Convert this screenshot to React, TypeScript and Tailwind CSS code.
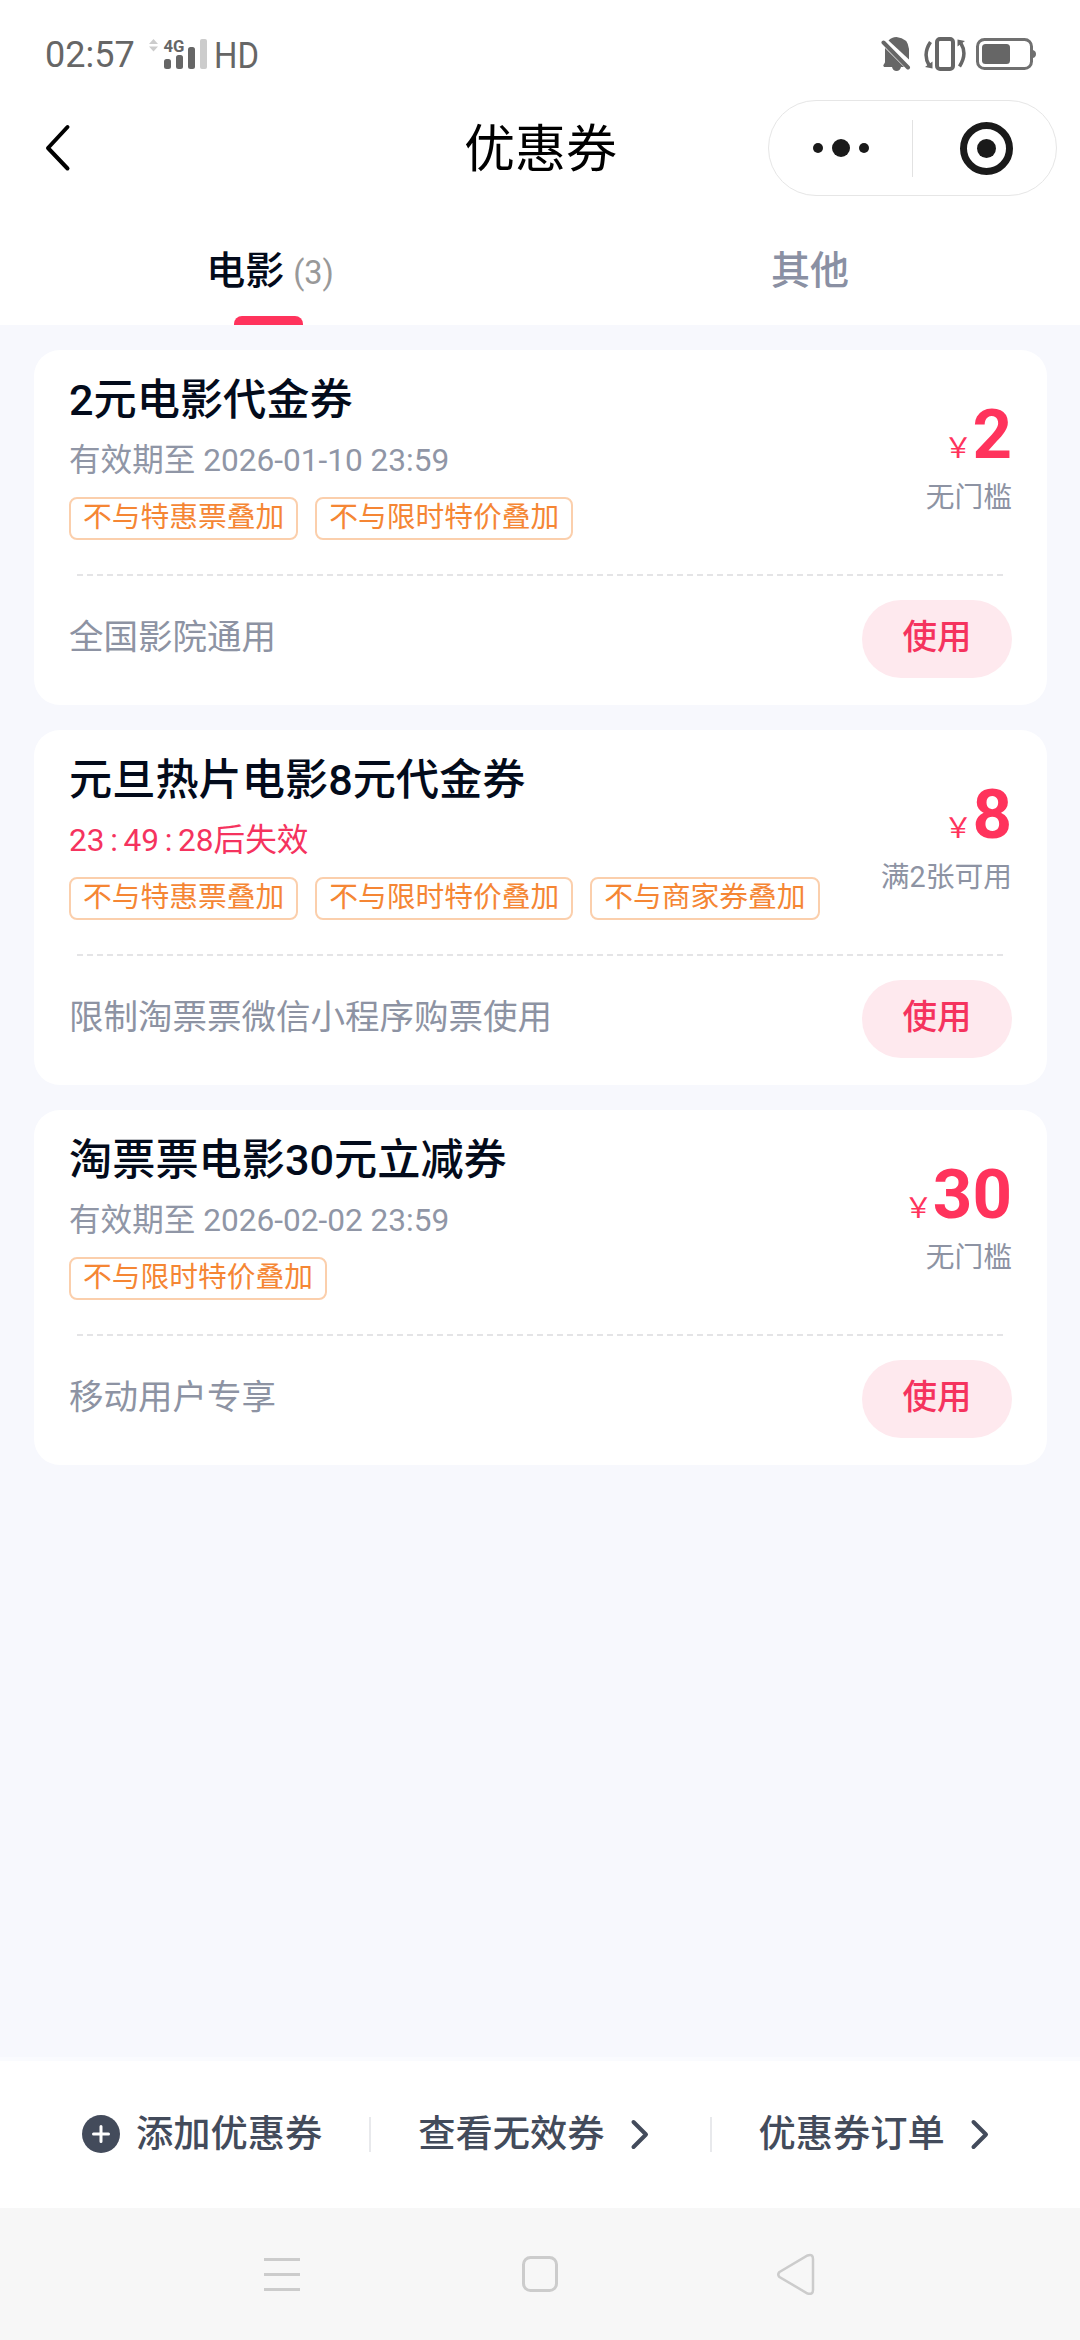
import { ReactNode } from 'react';

interface Coupon {
  id: string;
  title: string;
  validity?: string;
  countdown?: string[];
  tags: string[];
  amount: string;
  condition: string;
  scope: string;
}

const coupons: Coupon[] = [
  {
    id: '1',
    title: '2元电影代金券',
    validity: '有效期至 2026-01-10 23:59',
    tags: ['不与特惠票叠加', '不与限时特价叠加'],
    amount: '2',
    condition: '无门槛',
    scope: '全国影院通用',
  },
  {
    id: '2',
    title: '元旦热片电影8元代金券',
    countdown: ['23', '49', '28'],
    tags: ['不与特惠票叠加', '不与限时特价叠加', '不与商家券叠加'],
    amount: '8',
    condition: '满2张可用',
    scope: '限制淘票票微信小程序购票使用',
  },
  {
    id: '3',
    title: '淘票票电影30元立减券',
    validity: '有效期至 2026-02-02 23:59',
    tags: ['不与限时特价叠加'],
    amount: '30',
    condition: '无门槛',
    scope: '移动用户专享',
  },
];

const StatusBar = () => (
  <div className="flex h-[100px] items-start justify-between pl-[45px] pr-[43px] pt-[36px] text-[#666]">
    <div className="flex items-start">
      <span className="w-[90px] text-[36px] leading-[39px]">02:57</span>
      <svg className="-mt-[6px] ml-[13px]" width="62" height="44" viewBox="0 -8 62 44">
        <path d="M1 6 L5.500 1 L10 6Z M1 8.500 L5.500 13.500 L10 8.500Z" fill="#ccc" />
        <text x="15.500" y="14" fontSize="17" fontWeight="700" textLength="21" lengthAdjust="spacingAndGlyphs" fill="#666">4G</text>
        <rect x="16" y="21" width="7" height="10" rx="2.500" fill="#666" />
        <rect x="28" y="17" width="7" height="14" rx="2.500" fill="#666" />
        <rect x="40" y="9" width="7" height="22" rx="2.500" fill="#666" />
        <rect x="52" y="1" width="7" height="30" rx="2" fill="#ccc" />
      </svg>
      <svg className="-mt-[8px] ml-[3px]" width="50" height="52" viewBox="0 -10 50 52">
        <text x="1" y="30" fontSize="36" textLength="45" lengthAdjust="spacingAndGlyphs" fill="#666">HD</text>
      </svg>
    </div>
    <div className="flex">
      <svg width="30" height="36" viewBox="0 0 30 36" fill="#666">
        <path d="M7.500 4.500 Q10.500 1 15.500 1 Q27 2 28 13 V23.500Z" />
        <path d="M4 12 L23 31 H20 Q19 35 15.500 35 Q12 35 11 31 H3 Q1.500 29.500 3 28 Q4 27 4 26Z" />
        <path d="M2.500 6.500 L27 31.500" stroke="#666" strokeWidth="4" strokeLinecap="round" />
      </svg>
      <svg className="ml-[12px]" width="44" height="36" viewBox="0 0 44 36" fill="none" stroke="#666">
        <rect x="14" y="3" width="16" height="30" rx="3" strokeWidth="4" />
        <path d="M7.500 6 Q-0.500 18 6 29" strokeWidth="3.500" />
        <path d="M36.500 30.500 Q44.500 18 38 7.500" strokeWidth="3.500" />
        <path d="M2 31 L9.500 25.500 V32.500Z M42 5 L34.500 10.500 V3.500Z" fill="#666" stroke="none" />
      </svg>
      <svg className="ml-[9px]" width="61" height="36" viewBox="0 0 61 36" fill="none">
        <rect x="1.500" y="3.500" width="54" height="29" rx="7" stroke="#707070" strokeWidth="3" />
        <rect x="6" y="8" width="28" height="20" rx="3.500" fill="#666" />
        <path d="M57 14 Q60 15 60 18 Q60 21 57 22Z" fill="#707070" />
      </svg>
    </div>
  </div>
);

const TitleBar = () => (
  <div className="grid h-[96px] grid-cols-[1fr_auto_1fr] items-center pl-[44px] pr-[23px]">
    <svg width="28" height="50" viewBox="0 0 28 50" fill="none">
      <path d="M23.500 4 L4 25 L23.500 45.500" stroke="#000" strokeWidth="4" strokeLinecap="round" strokeLinejoin="round" />
    </svg>
    <h1 className="-translate-x-[10px] pt-[4px] text-[51px] leading-[60px] text-black">优惠券</h1>
    <div className="flex h-[96px] w-[289px] items-center justify-self-end rounded-full border border-[#e6e6e6]">
      <div className="flex flex-1 items-center justify-center gap-[9px]">
        <span className="size-[10px] rounded-full bg-[#1a1a1a]" />
        <span className="size-[18px] rounded-full bg-[#1a1a1a]" />
        <span className="size-[10px] rounded-full bg-[#1a1a1a]" />
      </div>
      <div className="h-[57px] w-px bg-[#e2e2e2]" />
      <div className="flex flex-1 items-center justify-center">
        <div className="ml-[3px] flex size-[53px] items-center justify-center rounded-full border-[7px] border-[#1a1a1a]">
          <span className="size-[19px] rounded-full bg-[#1a1a1a]" />
        </div>
      </div>
    </div>
  </div>
);

const Tabs = () => (
  <div className="grid h-[129px] grid-cols-2">
    <div className="flex flex-col items-center justify-between pt-[49px]">
      <div className="flex items-baseline leading-[52px]">
        <span className="text-[39px] font-medium text-[#030b1b]">电影</span>
        <span className="ml-[9px] text-[32.500px] text-[#999]">(3)</span>
      </div>
      <div className="-ml-[3px] h-[9px] w-[69px] rounded-t-[8px] bg-[#ff335c]" />
    </div>
    <div className="pt-[49px] text-center text-[39px] font-medium leading-[52px] text-[#8a90a3]">其他</div>
  </div>
);

const Countdown = ({ parts }: { parts: string[] }) => (
  <div className="flex h-[40px] text-[31.600px] leading-[40px] text-[#f5335e]">
    {parts.map((part, i) => (
      <span key={i} className="flex">
        {i > 0 && <span className="w-[19px] text-center">:</span>}
        {part}
      </span>
    ))}
    <span>后失效</span>
  </div>
);

const CouponCard = ({ coupon }: { coupon: Coupon }) => (
  <div className="h-[355px] rounded-[26px] bg-white px-[35px]">
    <div className="flex h-[224px] justify-between">
      <div className="pt-[21px]">
        <h2 className="h-[60px] whitespace-nowrap text-[43.200px] font-medium leading-[60px] text-[#030b1b]">{coupon.title}</h2>
        <div className="mt-[10px]">
          {coupon.countdown ? (
            <Countdown parts={coupon.countdown} />
          ) : (
            <div className="h-[40px] text-[31.600px] leading-[40px] text-[#9096a6]">{coupon.validity}</div>
          )}
        </div>
        <div className="mt-[16px] flex gap-[17px]">
          {coupon.tags.map((tag) => (
            <span
              key={tag}
              className="h-[43px] whitespace-nowrap rounded-[8px] border-2 border-[#fbcfac] px-[12px] text-[28.750px] leading-[36px] text-[#f58634]"
            >
              {tag}
            </span>
          ))}
        </div>
      </div>
      <div className="flex shrink-0 flex-col items-end pt-[46px]">
        <div className="flex h-[78px] items-baseline leading-[78px] text-[#ff335c]">
          <span className="text-[28.750px]">￥</span>
          <span className="text-[69px] font-bold">{coupon.amount}</span>
        </div>
        <div className="mt-[3px] text-[28.750px] leading-[40px] text-[#8d93a3]">{coupon.condition}</div>
      </div>
    </div>
    <div className="mx-[8px] h-[2px] bg-[repeating-linear-gradient(to_right,#e4e4e6_0_6px,transparent_6px_10px)]" />
    <div className="flex items-start justify-between pt-[24px]">
      <span className="pt-[11px] text-[34.500px] leading-[52px] text-[#8d93a3]">{coupon.scope}</span>
      <button className="flex h-[78px] w-[150px] justify-center rounded-full bg-[#fee9ee] pt-[11px] text-[34.500px] font-medium leading-[52px] text-[#f5335e]">
        使用
      </button>
    </div>
  </div>
);

const FooterLink = ({ children }: { children: ReactNode }) => (
  <div className="flex items-center">
    <span>{children}</span>
    <svg className="ml-[24px]" width="22" height="32" viewBox="0 0 22 32" fill="none">
      <path d="M4.500 4 L17 16.500 L4.500 29" stroke="#434b5b" strokeWidth="4" strokeLinecap="round" strokeLinejoin="round" />
    </svg>
  </div>
);

const Footer = () => (
  <div className="h-[151px] border-t-4 border-[#fafbfe] bg-white pl-[82px] pt-[48px] text-[37.250px] font-medium leading-[50px] text-[#434b5b]">
    <div className="flex h-[50px] items-center">
      <svg className="mr-[16px]" width="38" height="38" viewBox="0 0 38 38">
        <circle cx="19" cy="19" r="19" fill="#434b5b" />
        <path d="M19 11.500 V26.500 M11.500 19 H26.500" stroke="#fff" strokeWidth="3" strokeLinecap="round" />
      </svg>
      <span>添加优惠券</span>
      <div className="ml-[47px] mr-[47px] h-[35px] w-[2px] bg-[#e8e9ec]" />
      <FooterLink>查看无效券</FooterLink>
      <div className="ml-[59px] mr-[47px] h-[35px] w-[2px] bg-[#e8e9ec]" />
      <FooterLink>优惠券订单</FooterLink>
    </div>
  </div>
);

const NavBar = () => (
  <div className="flex h-[132px] items-center bg-[#f7f7f7] pl-[262px]">
    <svg width="40" height="44" viewBox="0 0 40 44" stroke="#ccc" strokeWidth="3">
      <path d="M2 7.500 H38 M2 22.500 H38 M2 37.500 H38" />
    </svg>
    <svg className="ml-[218px]" width="40" height="44" viewBox="0 0 40 44" fill="none" stroke="#ccc" strokeWidth="3">
      <rect x="3.500" y="5.500" width="33" height="33" rx="7" />
    </svg>
    <svg className="ml-[215px]" width="44" height="44" viewBox="0 0 44 44" fill="none" stroke="#ccc" strokeWidth="2.500">
      <path d="M4.500 20 L32.500 3.500 Q38 1.500 38 7 V38 Q38 43 32.500 41.500 L4.500 25 Q2 22.500 4.500 20Z" />
    </svg>
  </div>
);

const App = () => {
  return (
    <div className="flex h-[2340px] w-[1080px] flex-col overflow-hidden bg-[#f7f8fd] font-[Roboto,'Noto_Sans_CJK_SC',sans-serif]">
      <header className="h-[325px] bg-white">
        <StatusBar />
        <TitleBar />
        <Tabs />
      </header>
      <main className="flex flex-1 flex-col gap-[25px] pl-[34px] pr-[33px] pt-[25px]">
        {coupons.map((coupon) => (
          <CouponCard key={coupon.id} coupon={coupon} />
        ))}
      </main>
      <Footer />
      <NavBar />
    </div>
  );
};

export default App;
